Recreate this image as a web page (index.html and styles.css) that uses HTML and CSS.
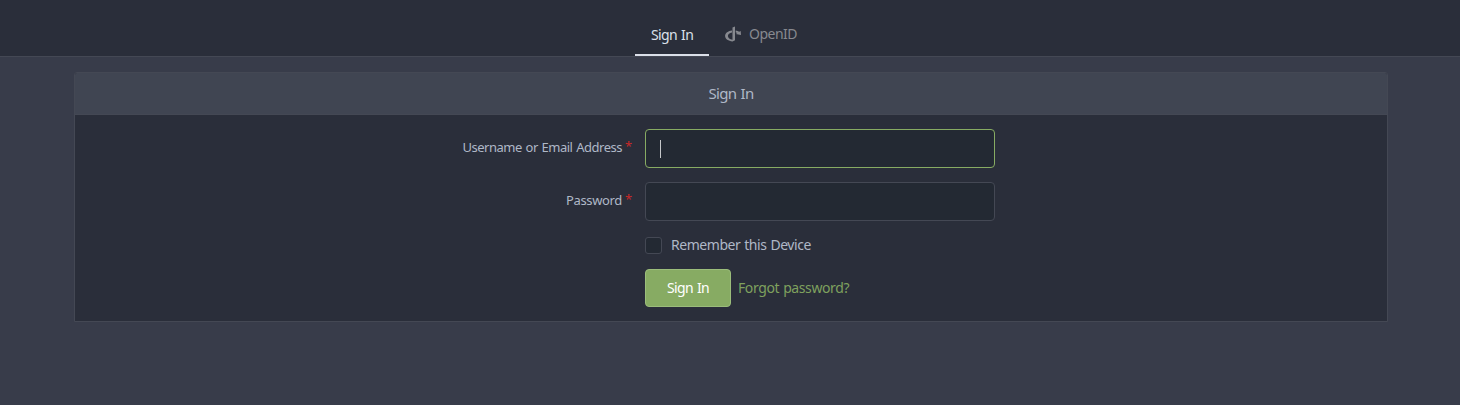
FILE: index.html
```html
<!DOCTYPE html>
<html lang="en">
<head>
<meta charset="utf-8">
<title>Sign In</title>
<link rel="stylesheet" href="styles.css">
</head>
<body>
<nav class="tabs">
  <a class="tab active">Sign In</a>
  <a class="tab openid"><svg class="openid-icon" viewBox="0 0 16 16"><path fill="currentColor" d="M7.500 1.500 10 .4v13.900L7.500 15.500C3.400 15.200.1 13 .1 10.100.1 7.200 3.100 5 7 4.600v1.800C4.600 6.900 2.900 8.200 2.900 10c0 2 1.900 3.300 4.600 3.800zM10.700 4.600c1.500.2 2.600.6 3.500 1.200l1.500-.8.3 4.100-5.200-1.100 1.600-.9c-.5-.3-1-.5-1.700-.7z"/></svg><span>OpenID</span></a>
</nav>
<main class="panel">
  <h4 class="panel-header">Sign In</h4>
  <form class="panel-body">
    <div class="field"><label class="label">Username or Email Address<span class="star">*</span></label><div class="input focused"><span class="caret"></span></div></div>
    <div class="field"><label class="label">Password<span class="star">*</span></label><div class="input"></div></div>
    <div class="remember"><span class="checkbox"></span><span>Remember this Device</span></div>
    <div class="actions"><button class="button" type="button">Sign In</button><a class="forgot">Forgot password?</a></div>
  </form>
</main>
</body>
</html>
```
FILE: styles.css
```css
* { box-sizing: border-box; }
body {
  margin: 0;
  background: #383c4a;
  color: #afb8c7;
  font: 14px/20px "Noto Sans", sans-serif;
  letter-spacing: -0.46px;
  word-spacing: 0.8px;
}
.tabs {
  display: flex;
  height: 57px;
  padding: 14px 0 0 635px;
  margin-bottom: 15px;
  background: #2a2e3a;
  border-bottom: 1px solid #444854;
}
.tab {
  display: flex;
  padding: 11px 16px 0;
  height: 42px;
  color: #87898f;
  letter-spacing: -0.6px;
}
.active { width: 74px; color: #dbe0ea; white-space: nowrap; border-bottom: 2px solid #dbdfe9; }
.openid { padding-top: 10px; letter-spacing: -0.5px; }
.openid-icon { width: 16px; height: 16px; margin: 2px 8px 0 0; }
.panel {
  width: 1314px;
  margin-left: 74px;
  height: 250px;
  border: 1px solid #444854;
  border-radius: 3px 3px 0 0;
  background: #2a2e3a;
}
.panel-header {
  margin: 0;
  height: 42px;
  border-bottom: 1px solid #444854;
  border-radius: 2px 2px 0 0;
  background: #404552;
  font-size: 15px;
  font-weight: 400;
  letter-spacing: -0.65px;
  line-height: 41px;
  text-align: center;
}
.panel-body { padding: 14px 0 0; }
.field { display: flex; height: 39px; margin-bottom: 14px; }
.label {
  width: 556px;
  margin-right: 14px;
  padding-top: 8px;
  font-size: 13px;
  letter-spacing: -0.48px;
  text-align: right;
}
.field + .field .label { letter-spacing: -0.35px; }
.star {
  display: inline-block;
  margin-left: 3px;
  color: #c82828;
  letter-spacing: 0;
  line-height: 14px;
  vertical-align: 1px;
  width: 6px;
  text-align: left;
}
.input {
  width: 350px;
  height: 39px;
  padding: 10px 14px;
  border: 1px solid #444854;
  border-radius: 4px;
  background: #232933;
}
.focused { border-color: #87ab63; }
.caret { display: block; width: 1px; height: 18px; background: #c5c7ca; }
.remember {
  display: flex;
  align-items: center;
  height: 20px;
  margin: 0 0 14px 570px;
}
.checkbox {
  width: 17px;
  height: 17px;
  margin-right: 9px;
  border: 1px solid #444854;
  border-radius: 3px;
  background: #232933;
}
.actions { display: flex; align-items: center; margin-left: 570px; }
.button {
  width: 86px;
  height: 38px;
  margin-right: 7px;
  padding: 0;
  border: 1px solid #9bbd7b;
  border-radius: 4px;
  background: #87ab63;
  color: #fff;
  font: inherit;
  letter-spacing: -0.6px;
  word-spacing: 0.8px;
}
.forgot { color: #7fa15e; letter-spacing: -0.4px; }
```
